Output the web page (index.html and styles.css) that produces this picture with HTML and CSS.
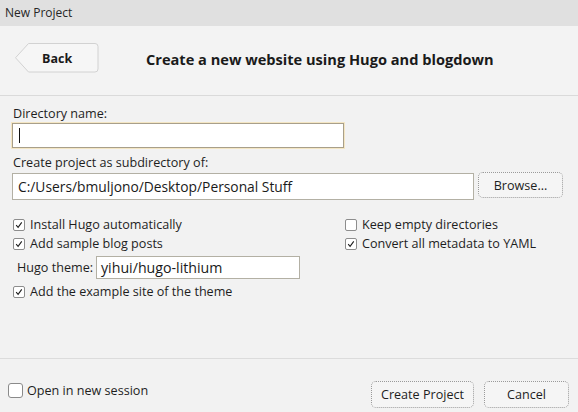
FILE: index.html
```html
<!DOCTYPE html>
<html>
<head>
<meta charset="utf-8">
<link rel="stylesheet" href="styles.css">
</head>
<body>
<div class="dialog">
  <div class="titlebar">New Project</div>
  <div class="header">
    <button class="back">
      <svg class="back-shape" width="84" height="30" viewBox="0 0 84 30"><path d="M13.5 0.5 H80 Q83 0.5 83 3.5 V26 Q83 29 80 29 H13.5 L0.5 14.75 Z" fill="#f6f6f6" stroke="#d2d2d2" stroke-width="1"/></svg>
      <span class="back-label">Back</span>
    </button>
    <h1 class="title">Create a new website using Hugo and blogdown</h1>
  </div>
  <div class="content">
    <div class="label first">Directory name:</div>
    <div class="input focus"><span class="caret"></span></div>
    <div class="label second">Create project as subdirectory of:</div>
    <div class="path-row">
      <div class="input path">C:/Users/bmuljono/Desktop/Personal Stuff</div>
      <button class="btn browse">Browse...</button>
    </div>
    <div class="options">
      <div class="col left">
        <div class="check-row"><span class="box checked"><svg width="12" height="12" viewBox="0 0 12 12"><path d="M2.6 6.2 L4.9 8.8 L9.3 2.8" fill="none" stroke="#1b1b1b" stroke-width="1.3"/></svg></span>Install Hugo automatically</div>
        <div class="check-row"><span class="box checked"><svg width="12" height="12" viewBox="0 0 12 12"><path d="M2.6 6.2 L4.9 8.8 L9.3 2.8" fill="none" stroke="#1b1b1b" stroke-width="1.3"/></svg></span>Add sample blog posts</div>
        <div class="theme-row"><span class="theme-label">Hugo theme:</span><div class="input theme">yihui/hugo-lithium</div></div>
        <div class="check-row example"><span class="box checked"><svg width="12" height="12" viewBox="0 0 12 12"><path d="M2.6 6.2 L4.9 8.8 L9.3 2.8" fill="none" stroke="#1b1b1b" stroke-width="1.3"/></svg></span>Add the example site of the theme</div>
      </div>
      <div class="col right">
        <div class="check-row"><span class="box"></span>Keep empty directories</div>
        <div class="check-row"><span class="box checked"><svg width="12" height="12" viewBox="0 0 12 12"><path d="M2.6 6.2 L4.9 8.8 L9.3 2.8" fill="none" stroke="#1b1b1b" stroke-width="1.3"/></svg></span>Convert all metadata to YAML</div>
      </div>
    </div>
  </div>
  <div class="footer">
    <div class="session"><span class="box big"></span>Open in new session</div>
    <div class="actions">
      <button class="btn create">Create Project</button>
      <button class="btn cancel">Cancel</button>
    </div>
  </div>
</div>
</body>
</html>
```
FILE: styles.css
```css
* { box-sizing: border-box; }
html, body { margin: 0; padding: 0; }
body {
  width: 578px;
  height: 412px;
  overflow: hidden;
  background: #f2f2f2;
  font-family: "Open Sans", "Noto Sans", sans-serif;
  color: #1e1e1e;
}
.dialog {
  display: flex;
  flex-direction: column;
  height: 412px;
}
.titlebar {
  height: 26px;
  background: #e0e0e0;
  font-size: 12px;
  line-height: 26px;
  padding-left: 5px;
  color: #262626;
}
.header {
  height: 70px;
  border-bottom: 1px solid #dadada;
  background: #f3f3f3;
  display: flex;
  align-items: flex-start;
}
.back {
  position: relative;
  margin: 17px 0 0 15px;
  width: 84px;
  height: 30px;
  border: 0;
  padding: 0;
  background: transparent;
  font-family: inherit;
  text-align: left;
}
.back-shape {
  position: absolute;
  left: 0;
  top: 0;
}
.back-label {
  position: relative;
  display: block;
  padding-left: 27px;
  font-weight: 700;
  font-size: 12.5px;
  line-height: 29px;
  color: #1a1a1a;
}
.title {
  margin: 23px 0 0 47px;
  font-size: 14.6px;
  font-weight: 700;
  line-height: 20px;
  color: #1a1a1a;
}
.content {
  flex: 1;
  padding: 10px 0 0 12px;
}
.label {
  font-size: 12.6px;
  line-height: 16px;
  height: 16px;
  padding-left: 1px;
}
.label.first { margin-bottom: 1px; }
.label.second { margin-top: 7px; margin-bottom: 2px; }
.input {
  background: #fff;
  border: 1px solid #b3b0a4;
  font-size: 14px;
  padding-left: 5px;
  color: #1a1a1a;
}
.input.focus {
  width: 332px;
  height: 25px;
  border-color: #a89f8a;
  box-shadow: 0 0 0 1px #f4e6c4;
  display: flex;
  align-items: center;
}
.caret {
  display: block;
  width: 1px;
  height: 15px;
  background: #111;
  margin-left: 1px;
}
.path-row {
  display: flex;
  align-items: flex-start;
}
.input.path {
  width: 462px;
  height: 27px;
  line-height: 25px;
  font-size: 13.8px;
}
.btn {
  font-family: inherit;
  font-size: 12.6px;
  color: #1e1e1e;
  background: #f5f5f5;
  border: 1px dotted #9a9a9a;
  border-radius: 5px;
  padding: 0;
}
.browse {
  width: 85px;
  height: 26px;
  margin: -1px 0 0 4px;
}
.options {
  display: flex;
  margin-top: 15px;
}
.col.left { width: 332px; }
.check-row {
  display: flex;
  align-items: center;
  height: 19px;
  font-size: 12.6px;
  padding-left: 1px;
}
.box {
  width: 12px;
  height: 12px;
  border: 1px solid #8d8d8d;
  border-radius: 2px;
  background: #fff;
  margin-right: 5px;
  display: flex;
  align-items: center;
  justify-content: center;
  flex: none;
}
.box svg { display: block; }
.theme-row {
  display: flex;
  align-items: center;
  margin-top: 3px;
  height: 23px;
}
.theme-label {
  font-size: 12.6px;
  padding-left: 5px;
  width: 84px;
}
.input.theme {
  width: 204px;
  height: 23px;
  line-height: 21px;
  padding-left: 4px;
  font-size: 14.2px;
}
.check-row.example { margin-top: 3px; }
.footer {
  height: 54px;
  border-top: 1px solid #dcdcdc;
  display: flex;
  justify-content: space-between;
  align-items: flex-start;
  padding: 22px 9px 0 8px;
}
.session {
  display: flex;
  align-items: center;
  font-size: 12.6px;
  margin-top: 1px;
  height: 17px;
}
.box.big {
  width: 15px;
  height: 15px;
  border-radius: 3px;
  border-color: #8a8a8a;
  margin-right: 4px;
}
.actions {
  display: flex;
  gap: 10px;
}
.create { width: 103px; height: 27px; }
.cancel { width: 85px; height: 27px; }
```
